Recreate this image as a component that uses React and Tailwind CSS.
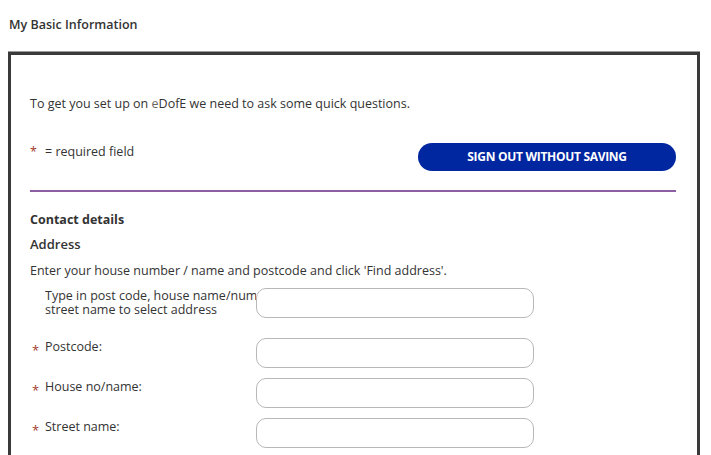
import React from "react";

const font = { fontFamily: "'Open Sans', 'Liberation Sans', sans-serif" };

const Field = ({ label, required, twoLine }) => (
  <div className="flex items-start">
    <div className="w-[15px] shrink-0 text-[#a33a2a] text-[13px] leading-[16px] pt-[4px] pl-[2px]">
      {required ? "*" : ""}
    </div>
    <div className="w-[211px] shrink-0 overflow-hidden">
      {twoLine ? (
        <div className="w-[230px] text-[12.5px] leading-[14px] text-[#333] pt-[1px] whitespace-nowrap">
          Type in post code, house name/number or
          <br />
          street name to select address
        </div>
      ) : (
        <div className="text-[12.5px] leading-[16px] text-[#333] pt-[1px]">{label}</div>
      )}
    </div>
    <input
      type="text"
      className="relative z-10 w-[278px] h-[30px] bg-white border border-[#b8b8b8] rounded-[10px] focus:outline-none"
    />
  </div>
);

export default function App() {
  return (
    <div className="w-[711px] h-[455px] overflow-hidden bg-white text-[#333]" style={font}>
      <div className="pl-[9px] pt-[16px] h-[52px] text-[12.5px] font-semibold text-[#333]">
        My Basic Information
      </div>
      <div className="ml-[8px] w-[692px] h-[420px] border-[3px] border-[#3a3a3a] border-b-0 shadow-[0_-1px_0_#9a9a9a] pl-[19px] pr-[21px]">
        <div className="pt-[41px] text-[12.5px] leading-[16px]">
          To get you set up on <span className="text-[#666]">e</span>DofE we need to ask some quick questions.
        </div>
        <div className="mt-[30px] flex items-start justify-between">
          <div className="flex items-start text-[12.5px] leading-[16px] pt-[2px]">
            <span className="text-[#a33a2a] w-[15px]">*</span>
            <span>= required field</span>
          </div>
          <button className="mt-[1px] w-[258px] h-[28px] rounded-full bg-[#0026a0] text-white text-[12px] font-bold tracking-tight uppercase">
            SIGN OUT WITHOUT SAVING
          </button>
        </div>
        <div className="mt-[19px] h-[2px] bg-[#8e5ea2]" />
        <div className="mt-[20px] text-[12.5px] font-bold leading-[16px]">Contact details</div>
        <div className="mt-[8px] text-[13px] font-semibold leading-[16px]">Address</div>
        <div className="mt-[11px] text-[12.5px] leading-[16px]">
          Enter your house number / name and postcode and click 'Find address'.
        </div>
        <div className="mt-[9px] flex flex-col gap-[20px] w-[505px]">
          <Field twoLine />
          <div className="flex flex-col gap-[10px]">
            <Field label="Postcode:" required />
            <Field label="House no/name:" required />
            <Field label="Street name:" required />
          </div>
        </div>
      </div>
    </div>
  );
}
